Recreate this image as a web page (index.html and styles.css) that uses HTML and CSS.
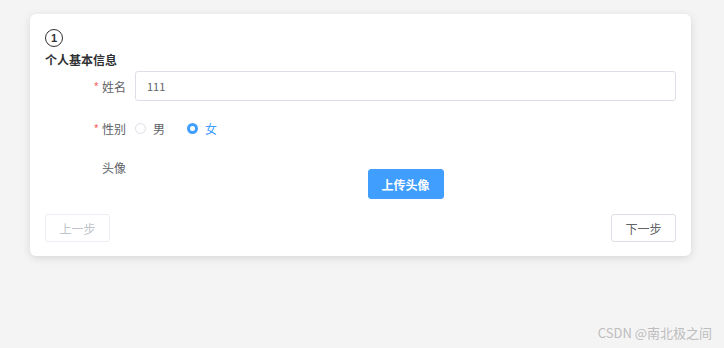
FILE: index.html
```html
<!DOCTYPE html>
<html lang="zh-CN">
<head>
  <meta charset="UTF-8">
  <meta name="viewport" content="width=device-width, initial-scale=1.0">
  <title>个人基本信息</title>
  <link rel="stylesheet" href="styles.css">
</head>
<body>
  <div class="card">
    <div class="step-no">1</div>
    <div class="step-title">个人基本信息</div>

    <div class="form">
      <div class="form-row">
        <label class="form-label required">姓名</label>
        <div class="form-field">
          <input class="text-input" type="text" value="111">
        </div>
      </div>

      <div class="form-row">
        <label class="form-label required">性别</label>
        <div class="form-field radios">
          <span class="radio"><span class="dot"></span>男</span>
          <span class="radio checked"><span class="dot"></span>女</span>
        </div>
      </div>

      <div class="form-row avatar-row">
        <label class="form-label">头像</label>
        <div class="form-field center">
          <button class="btn primary">上传头像</button>
        </div>
      </div>
    </div>

    <div class="footer">
      <button class="btn" disabled>上一步</button>
      <button class="btn">下一步</button>
    </div>
  </div>

  <div class="watermark">CSDN @南北极之间</div>
</body>
</html>
```

FILE: styles.css
```css
body {
  margin: 0;
  padding: 14px 33px 0 30px;
  background-color: #f4f4f4;
  font-family: "Noto Sans CJK SC", "Noto Sans", sans-serif;
  font-size: 12px;
  color: #606266;
  height: 348px;
  box-sizing: border-box;
  position: relative;
}
.card {
  background-color: #fff;
  border-radius: 6px;
  box-shadow: 0 2px 8px rgba(0, 0, 0, 0.12);
  padding: 15px 15px 14px;
  height: 242px;
  box-sizing: border-box;
}
.step-no {
  width: 16px;
  height: 16px;
  border: 1px solid #303133;
  border-radius: 50%;
  display: flex;
  align-items: center;
  justify-content: center;
  font-family: "Liberation Sans", Arial, sans-serif;
  font-size: 11px;
  font-weight: bold;
  color: #303133;
  line-height: 1;
}
.step-title {
  margin-top: 4px;
  font-weight: bold;
  color: #303133;
  font-size: 12px;
  line-height: 18px;
}
.form {
  margin-top: 2px;
}
.form-row {
  display: flex;
  align-items: center;
  min-height: 30px;
  margin-bottom: 12px;
}
.form-label {
  width: 90px;
  padding-right: 9px;
  box-sizing: border-box;
  text-align: right;
  color: #606266;
}
.required::before {
  content: "*";
  color: #f56c6c;
  margin-right: 3px;
}
.form-field {
  flex: 1;
}
.text-input {
  width: 100%;
  height: 30px;
  box-sizing: border-box;
  border: 1px solid #dcdfe6;
  border-radius: 3px;
  padding: 0 11px;
  font-family: inherit;
  font-size: 11px;
  color: #606266;
  outline: none;
}
.radios {
  display: flex;
  gap: 22px;
}
.radio {
  display: flex;
  align-items: center;
  gap: 7px;
  color: #606266;
}
.radio .dot {
  width: 11px;
  height: 11px;
  border: 1px solid #dcdfe6;
  border-radius: 50%;
  box-sizing: border-box;
}
.radio.checked {
  color: #409eff;
}
.radio.checked .dot {
  border: 3.5px solid #409eff;
  background-color: #fff;
}
.avatar-row {
  align-items: flex-start;
  margin-top: 14px;
  margin-bottom: 15px;
}
.avatar-row .form-label {
  line-height: 16px;
  padding-top: 3px;
}
.center {
  display: flex;
  justify-content: center;
  padding-top: 12px;
}
.btn {
  height: 28px;
  padding: 0;
  border: 1px solid #dcdfe6;
  border-radius: 3px;
  background-color: #fff;
  color: #606266;
  font-family: inherit;
  font-size: 12px;
  white-space: nowrap;
  cursor: pointer;
}
.btn:disabled {
  color: #c0c4cc;
  border-color: #ebeef5;
  cursor: not-allowed;
}
.btn.primary {
  height: 30px;
  width: 76px;
  background-color: #409eff;
  border-color: #409eff;
  color: #fff;
  font-weight: bold;
}
.footer {
  display: flex;
  justify-content: space-between;
}
.footer .btn {
  width: 65px;
}
.watermark {
  position: absolute;
  right: 12px;
  bottom: 6px;
  color: #bdbdbd;
  font-size: 13px;
}
```
